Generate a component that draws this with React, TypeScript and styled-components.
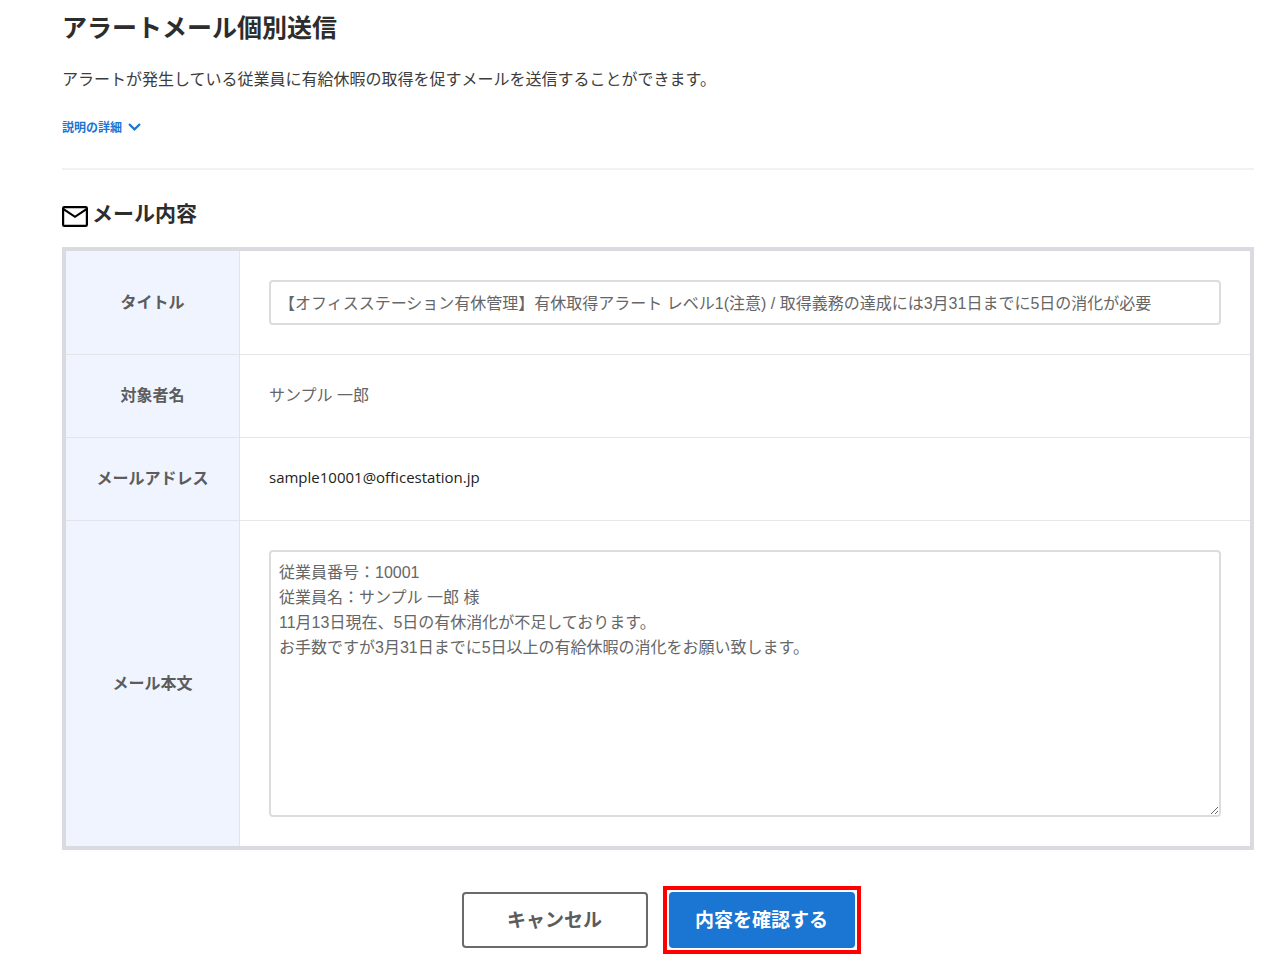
import React from 'react';
import styled, { createGlobalStyle } from 'styled-components';

const GlobalStyle = createGlobalStyle`
  *, *::before, *::after { box-sizing: border-box; }
  body {
    margin: 0;
    background: #fff;
    color: #2d2d2d;
    font-family: 'Liberation Sans', 'Noto Sans CJK JP', sans-serif;
    font-size: 16px;
    line-height: 24px;
  }
`;

const Page = styled.main`
  padding: 10px 27px 12px 62px;
`;

const PageTitle = styled.h1`
  margin: 0;
  font-size: 25px;
  line-height: 36px;
`;

const Lead = styled.p`
  margin: 22px 0 0;
  color: #3c3c3c;
`;

const DetailToggle = styled.button`
  display: flex;
  align-items: center;
  gap: 6px;
  margin: 24px 0 0;
  padding: 0;
  border: 0;
  background: none;
  color: #1b75d3;
  font-family: inherit;
  font-size: 12px;
  font-weight: 700;
  line-height: 24px;
  cursor: pointer;

  svg {
    margin-bottom: 2px;
  }
`;

const Divider = styled.hr`
  margin: 28px 0 0;
  border: 0;
  border-top: 2px solid #f2f2f2;
`;

const SectionTitle = styled.h2`
  display: flex;
  align-items: center;
  gap: 4px;
  margin: 28px 0 0;
  font-size: 21px;
  line-height: 32px;

  svg {
    margin-top: 4px;
  }
`;

const MailTable = styled.table`
  width: 100%;
  margin-top: 17px;
  border: 4px solid #dadbe0;
  border-spacing: 0;
  color: #666;
`;

const HeadCell = styled.th`
  width: 174px;
  padding: 0;
  border-right: 1px solid #e2e4ea;
  border-bottom: 1px solid #e2e4ea;
  background: #eff4fe;
  color: #5c5c5c;
  text-align: center;

  tr:last-child > & {
    border-bottom: 0;
  }
`;

const DataCell = styled.td`
  padding: 29px;
  border-bottom: 1px solid #e6e7ea;

  tr:last-child > & {
    border-bottom: 0;
  }
`;

const TitleInput = styled.input`
  display: block;
  width: 100%;
  height: 45px;
  padding: 0 8px 2px;
  border: 2px solid #dcdcde;
  border-radius: 4px;
  background: #fff;
  color: #666;
  font: inherit;
`;

const BodyInput = styled.textarea`
  display: block;
  width: 100%;
  height: 267px;
  padding: 8px;
  border: 2px solid #dcdcde;
  border-radius: 4px;
  background: #fff;
  color: #666;
  font: inherit;
  line-height: 25px;
  resize: both;
`;

const Address = styled.span`
  display: block;
  padding-bottom: 4px;
  color: #222;
  font-family: 'Open Sans', 'Noto Sans', sans-serif;
  font-size: 15px;
  line-height: 20px;
`;

const Actions = styled.div`
  display: flex;
  justify-content: center;
  gap: 21px;
  margin-top: 42px;
`;

const ActionButton = styled.button<{ $primary?: boolean }>`
  display: block;
  width: 186px;
  height: 56px;
  padding: 0 0 4px;
  border: 2px solid ${(p) => (p.$primary ? '#1b75d3' : '#6a6a6a')};
  border-radius: 4px;
  background: ${(p) => (p.$primary ? '#1b75d3' : '#fff')};
  color: ${(p) => (p.$primary ? '#fff' : '#5c5c5c')};
  font-family: inherit;
  font-size: 19px;
  font-weight: 700;
  cursor: pointer;
`;

const Highlight = styled.div`
  outline: 4px solid #fe0000;
  outline-offset: 2px;
`;

const ChevronIcon = () => (
  <svg width="13" height="8" viewBox="0 0 13 8" fill="none" stroke="currentColor" strokeWidth="2.2" aria-hidden="true">
    <path d="M1 1l5.5 5.4L12 1" />
  </svg>
);

const MailIcon = () => (
  <svg width="26" height="21" viewBox="0 0 26 21" fill="none" stroke="#000" strokeWidth="2.2" aria-hidden="true">
    <rect x="1.1" y="1.1" width="23.8" height="18.8" rx="1.2" />
    <path d="M1.5 3.2L13 10.8 24.5 3.2" />
  </svg>
);

const mailTitle =
  '【オフィスステーション有休管理】有休取得アラート レベル1(注意) / 取得義務の達成には3月31日までに5日の消化が必要';

const mailBody = [
  '従業員番号：10001',
  '従業員名：サンプル 一郎 様',
  '11月13日現在、5日の有休消化が不足しております。',
  'お手数ですが3月31日までに5日以上の有給休暇の消化をお願い致します。',
].join('\n');

export default function App() {
  return (
    <>
      <GlobalStyle />
      <Page lang="ja">
        <PageTitle>アラートメール個別送信</PageTitle>
        <Lead>アラートが発生している従業員に有給休暇の取得を促すメールを送信することができます。</Lead>
        <DetailToggle type="button" aria-expanded="false">
          説明の詳細
          <ChevronIcon />
        </DetailToggle>
        <Divider />
        <SectionTitle>
          <MailIcon />
          メール内容
        </SectionTitle>
        <form onSubmit={(e) => e.preventDefault()}>
          <MailTable>
            <tbody>
              <tr>
                <HeadCell scope="row">
                  <label htmlFor="mail-title">タイトル</label>
                </HeadCell>
                <DataCell>
                  <TitleInput id="mail-title" type="text" defaultValue={mailTitle} />
                </DataCell>
              </tr>
              <tr>
                <HeadCell scope="row">対象者名</HeadCell>
                <DataCell>サンプル 一郎</DataCell>
              </tr>
              <tr>
                <HeadCell scope="row">メールアドレス</HeadCell>
                <DataCell>
                  <Address>sample10001@officestation.jp</Address>
                </DataCell>
              </tr>
              <tr>
                <HeadCell scope="row">
                  <label htmlFor="mail-body">メール本文</label>
                </HeadCell>
                <DataCell>
                  <BodyInput id="mail-body" defaultValue={mailBody} />
                </DataCell>
              </tr>
            </tbody>
          </MailTable>
          <Actions>
            <ActionButton type="button">キャンセル</ActionButton>
            <Highlight>
              <ActionButton type="submit" $primary>
                内容を確認する
              </ActionButton>
            </Highlight>
          </Actions>
        </form>
      </Page>
    </>
  );
}
